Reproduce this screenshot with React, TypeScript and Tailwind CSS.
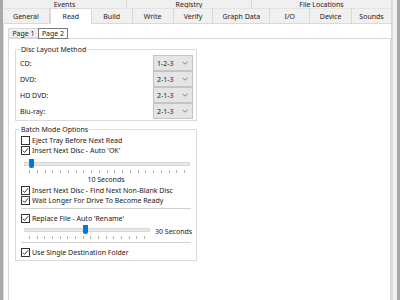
import React from "react";

const font = { fontFamily: '"Noto Sans", "Open Sans", sans-serif' };

const Check = ({ checked, label }: { checked: boolean; label: string }) => (
  <div className="flex items-center h-[10px] gap-[2px] whitespace-nowrap">
    <div className="w-[9px] h-[9px] border border-[#333] bg-white flex items-center justify-center shrink-0">
      {checked && (
        <svg width="7" height="7" viewBox="0 0 7 7">
          <path d="M0.8 3.6 L2.6 5.4 L6.2 1.2" fill="none" stroke="#222" strokeWidth="0.9" />
        </svg>
      )}
    </div>
    <span>{label}</span>
  </div>
);

const Ticks = ({ count, width }: { count: number; width: number }) => (
  <div className="flex justify-between h-[3px]" style={{ width }}>
    {Array.from({ length: count }).map((_, i) => (
      <div key={i} className="w-px h-[3px] bg-[#b5b5b5]" />
    ))}
  </div>
);

const Slider = ({ width, pos }: { width: number; pos: number }) => (
  <div className="flex flex-col gap-[2px] shrink-0" style={{ width }}>
    <div className="relative h-[9px] flex items-center">
      <div className="w-full h-[4px] bg-[#e7e7e7] border border-[#d9d9d9]" />
      <div className="absolute top-0 w-[5px] h-[9px] bg-[#0078d7] rounded-b-[2px]" style={{ left: pos }} />
    </div>
    <div className="px-[5px]">
      <Ticks count={Math.round(width / 8)} width={width - 10} />
    </div>
  </div>
);

const Combo = ({ value }: { value: string }) => (
  <div className="w-[40px] h-[16px] bg-[#e5e5e5] border border-[#c4c4c4] flex items-center justify-between pl-[3px] pr-[4px]">
    <span>{value}</span>
    <svg width="6" height="4" viewBox="0 0 6 4">
      <path d="M0.5 0.8 L3 3.2 L5.5 0.8" fill="none" stroke="#666" strokeWidth="0.8" />
    </svg>
  </div>
);

const topTabs = [
  { t: "Events", w: 124 },
  { t: "Registry", w: 125 },
  { t: "File Locations", w: 140 },
];

const midTabs = [
  { t: "General", w: 47 },
  { t: "Read", w: 42 },
  { t: "Build", w: 41 },
  { t: "Write", w: 41 },
  { t: "Verify", w: 40 },
  { t: "Graph Data", w: 57 },
  { t: "I/O", w: 40 },
  { t: "Device", w: 42 },
  { t: "Sounds", w: 40 },
];

export default function App() {
  return (
    <div className="w-[400px] h-[300px] overflow-hidden bg-[#f0f0f0] text-[7px] text-[#1a1a1a] leading-none" style={font}>
      <div className="flex h-[300px] border-l-[3px] border-[#a8a8a8]">
        <div className="w-[389px] flex flex-col">
          {/* top tab row */}
          <div className="flex h-[8px]">
            {topTabs.map((tb) => (
              <div key={tb.t} className="h-[8px] flex items-center justify-center border-r border-[#d9d9d9] bg-[#f0f0f0]" style={{ width: tb.w }}>
                {tb.t}
              </div>
            ))}
          </div>
          {/* middle tab row */}
          <div className="flex h-[15px] border-t border-[#e3e3e3] items-end relative z-10">
            {midTabs.map((tb) =>
              tb.t === "Read" ? (
                <div key={tb.t} className="h-[16px] bg-white border-x border-t border-[#d9d9d9] flex items-start justify-center pt-[4px] -mb-px" style={{ width: tb.w }}>
                  {tb.t}
                </div>
              ) : (
                <div key={tb.t} className="h-[15px] border-r border-[#d9d9d9] flex items-center justify-center pt-[2px]" style={{ width: tb.w }}>
                  {tb.t}
                </div>
              )
            )}
          </div>
          {/* panel */}
          <div className="flex-1 bg-white border border-[#d9d9d9] pl-[4px] pt-[2px]">
            <div className="flex h-[12px] items-end">
              <div className="h-[10px] w-[30px] flex items-center justify-center bg-[#f0f0f0] border-y border-l border-[#d9d9d9]">Page 1</div>
              <div className="h-[11px] w-[30px] flex items-center justify-center bg-white border border-[#7a7a7a] -mb-px">Page 2</div>
            </div>
            <div className="h-[300px] border border-[#d9d9d9] pt-[6px] pl-[6px]">
              {/* disc layout group */}
              <div className="w-[182px] relative border border-[#dcdcdc] mt-[4px] pl-[4px] pr-[3px] pt-[5px] pb-[1px]">
                <span className="absolute -top-[4px] left-[4px] bg-white px-px">Disc Layout Method</span>
                {[
                  ["CD:", "1-2-3"],
                  ["DVD:", "2-1-3"],
                  ["HD DVD:", "2-1-3"],
                  ["Blu-ray:", "2-1-3"],
                ].map(([l, v]) => (
                  <div key={l} className="flex items-center justify-between h-[16px]">
                    <span>{l}</span>
                    <Combo value={v} />
                  </div>
                ))}
              </div>
              {/* batch group */}
              <div className="w-[182px] relative border border-[#dcdcdc] mt-[8px] pl-[5px] pr-[5px] pt-[5px] pb-[3px] flex flex-col">
                <span className="absolute -top-[4px] left-[4px] bg-white px-px">Batch Mode Options</span>
                <Check checked={false} label="Eject Tray Before Next Read" />
                <Check checked label="Insert Next Disc - Auto 'OK'" />
                <div className="mt-[4px] ml-[3px]">
                  <Slider width={166} pos={5} />
                </div>
                <div className="text-center h-[8px] mt-[3px] mb-[1px]">10 Seconds</div>
                <Check checked label="Insert Next Disc - Find Next Non-Blank Disc" />
                <Check checked label="Wait Longer For Drive To Become Ready" />
                <div className="h-px bg-[#d0d0d0] mt-[3px] mb-[4px]" />
                <Check checked label="Replace File - Auto 'Rename'" />
                <div className="flex items-start gap-[5px] ml-[3px] mt-[2px]">
                  <Slider width={126} pos={59} />
                  <span className="mt-[3px] whitespace-nowrap">30 Seconds</span>
                </div>
                <div className="h-px bg-[#d0d0d0] mt-[3px] mb-[4px]" />
                <Check checked label="Use Single Destination Folder" />
              </div>
            </div>
          </div>
        </div>
        <div className="w-[8px] border-l border-[#e0e0e0] border-r-[3px] border-r-[#a8a8a8] bg-[#f0f0f0]" />
      </div>
    </div>
  );
}
